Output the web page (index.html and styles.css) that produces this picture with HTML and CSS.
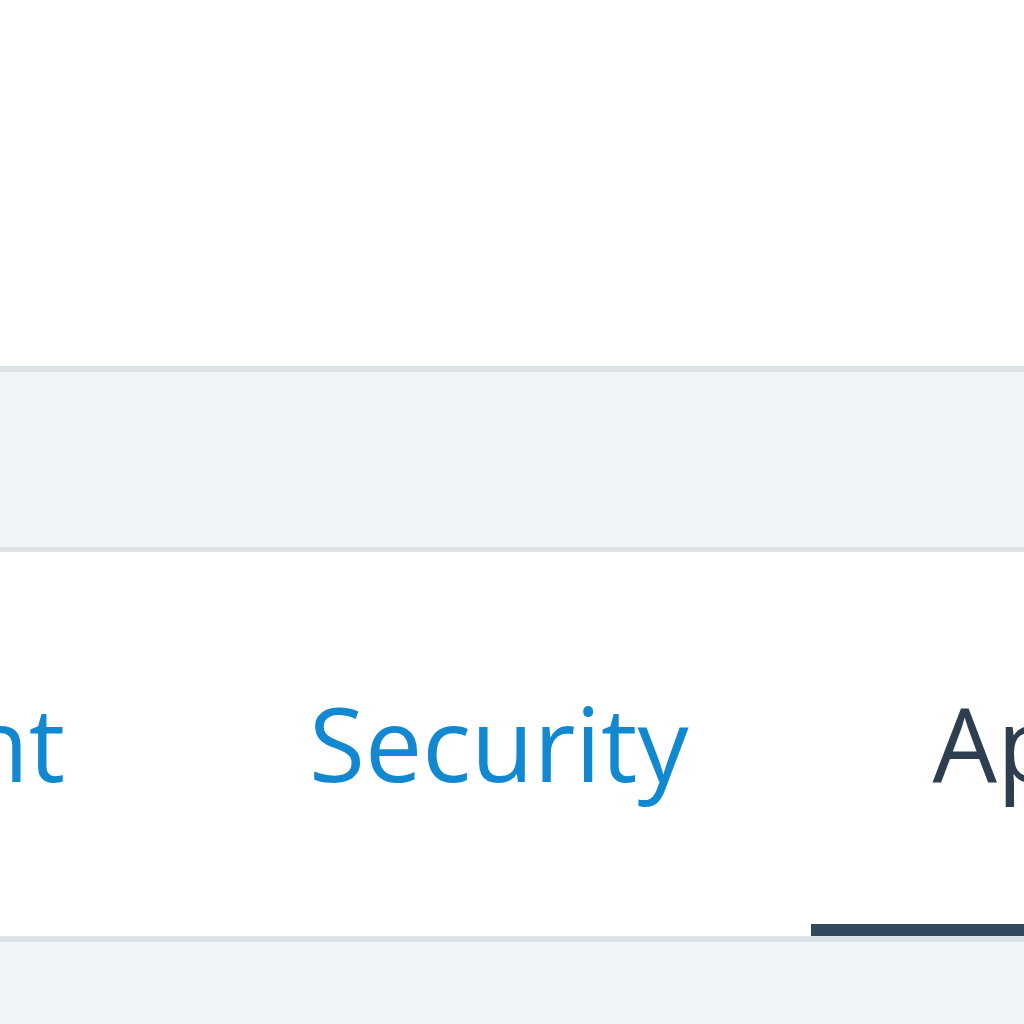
FILE: index.html
```html
<!DOCTYPE html>
<html>
<head>
<meta charset="utf-8">
<link rel="stylesheet" href="styles.css">
</head>
<body>
<div class="page">
  <header class="top"></header>
  <section class="strip"></section>
  <nav class="tabbar">
    <ul class="tabs">
      <li class="tab">Account</li>
      <li class="tab">Security</li>
      <li class="tab active">Appearance</li>
      <li class="tab">Notifications</li>
    </ul>
  </nav>
  <main class="content"></main>
</div>
</body>
</html>
```
FILE: styles.css
```css
html, body {
  margin: 0;
  padding: 0;
  background: #ffffff;
}
.page {
  width: 1024px;
  height: 1024px;
  overflow: hidden;
  display: flex;
  flex-direction: column;
  font-family: "Open Sans", "Noto Sans", sans-serif;
}
.top {
  height: 366px;
  background: #ffffff;
  flex: none;
}
.strip {
  flex: none;
  height: 175px;
  background: #f1f4f7;
  border-top: 6px solid #dce3e8;
  border-bottom: 5px solid #dce3e8;
}
.tabbar {
  flex: none;
  height: 384px;
  background: #ffffff;
  border-bottom: 6px solid #dce3e8;
  overflow: hidden;
}
.tabs {
  list-style: none;
  margin: 0 0 0 -442px;
  padding: 0;
  display: flex;
  height: 100%;
  white-space: nowrap;
}
.tab {
  flex: none;
  padding: 0 122px;
  height: 100%;
  box-sizing: border-box;
  display: flex;
  align-items: center;
  padding-top: 8px;
  font-size: 102px;
  color: #1288d0;
  border-bottom: 12px solid transparent;
}
.tab.active {
  color: #2c3e50;
  border-bottom-color: #34495e;
}
.content {
  flex: 1;
  background: #f2f5f7;
}
```
